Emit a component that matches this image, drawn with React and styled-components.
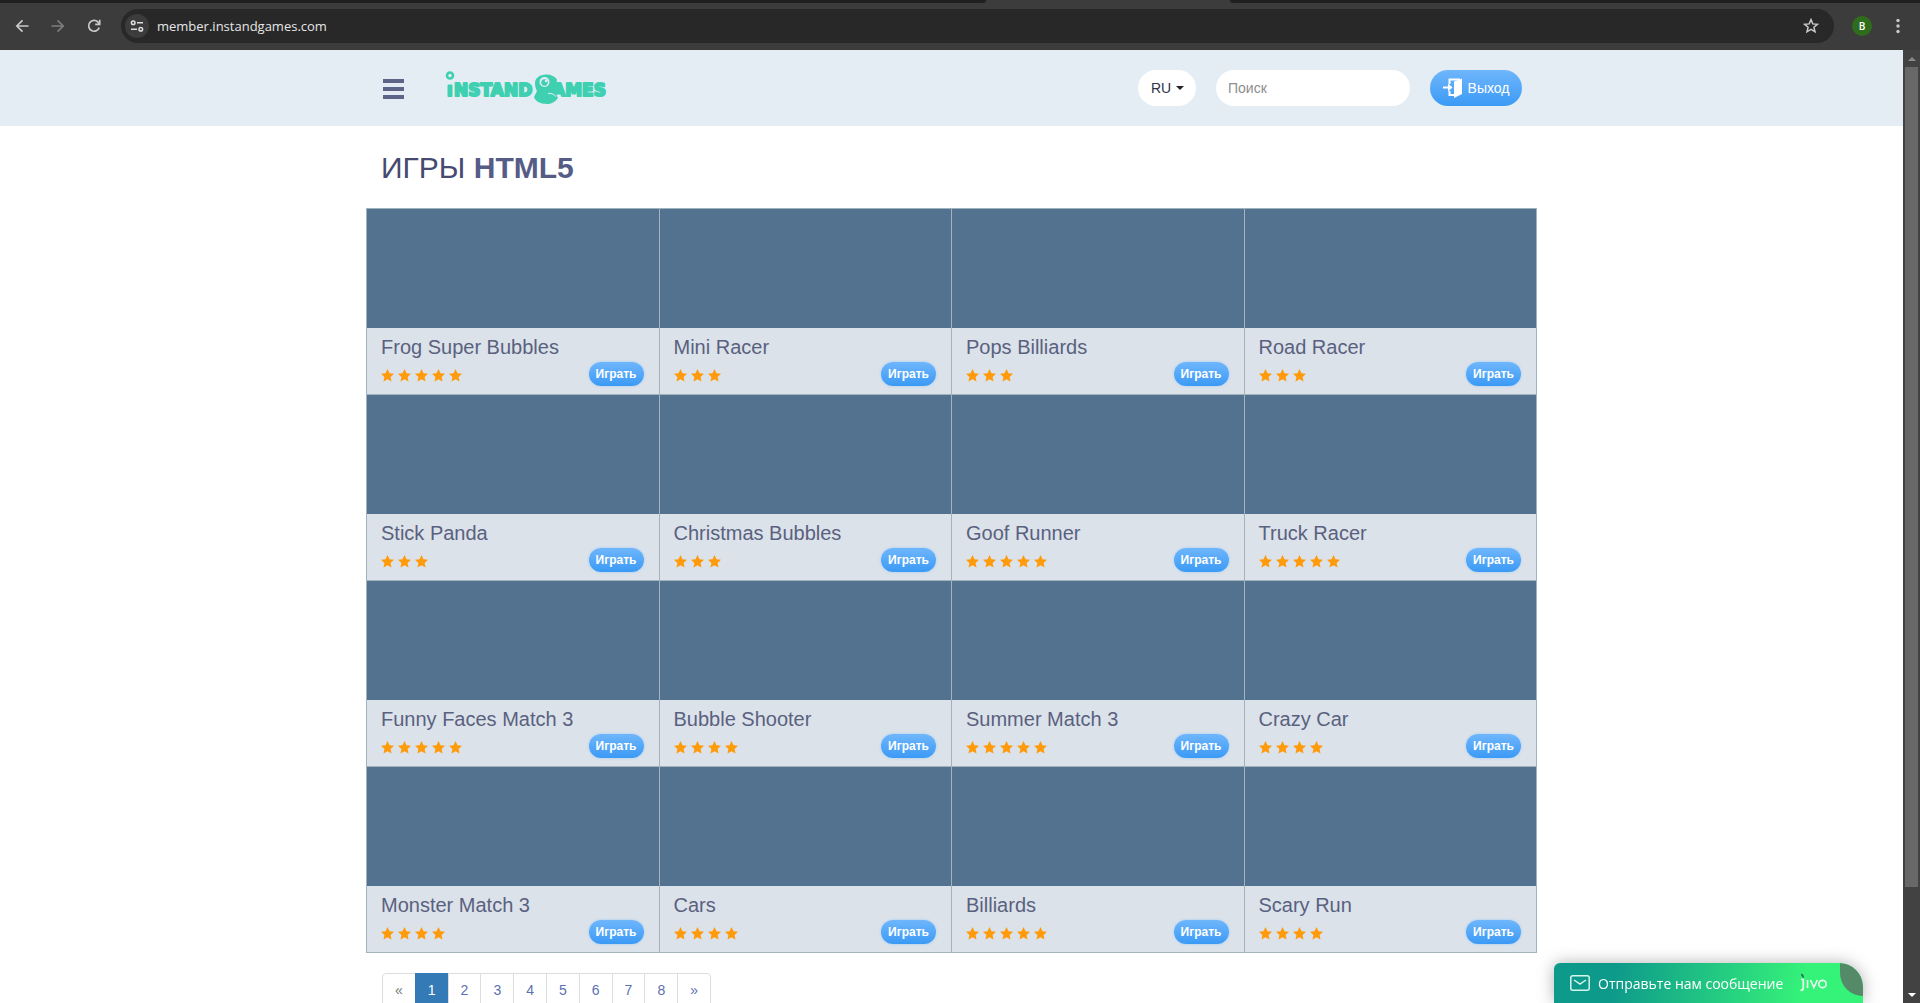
import React from 'react';
import styled, { createGlobalStyle } from 'styled-components';

const GlobalStyle = createGlobalStyle`
* { box-sizing: border-box; }
body {
  margin: 0;
  background: #fff;
  font-family: "Liberation Sans", Arial, sans-serif;
  font-size: 14px;
  line-height: 20px;
}
button, input, select { font-family: inherit; font-size: inherit; }
a { text-decoration: none; }
`
const Window = styled.div`
  display: flex;
  flex-direction: column;
  height: 100vh;
  overflow: hidden;
`

/* browser bar */
const TabStrip = styled.div`
  display: grid;
  grid-template-columns: 986fr 244fr 690fr;
  height: 3px;
  flex: none;
  background: #3c3c3c;
`
const TabGap = styled.div`
  background: #202020;
  border-radius: ${({ $side }) => ($side === 'left' ? '0 0 4px 0' : '0 0 0 4px')};
`
const Toolbar = styled.div`
  display: flex;
  align-items: center;
  flex: none;
  height: 47px;
  padding: 0 10px;
  background: #3c3c3c;
`
const ToolButton = styled.button`
  display: flex;
  align-items: center;
  justify-content: center;
  width: 24px;
  height: 32px;
  padding: 0;
  border: 0;
  background: none;
  color: ${({ $dim }) => ($dim ? '#7d7d7d' : '#c9c9c9')};
`
const Address = styled.div`
  display: flex;
  align-items: center;
  flex: 1;
  height: 34px;
  margin: 0 16px 2px 7px;
  padding: 0 11px 0 4px;
  border-radius: 17px;
  background: #282828;
`
const SiteInfo = styled.button`
  display: flex;
  align-items: center;
  justify-content: center;
  width: 24px;
  height: 24px;
  padding: 0;
  border: 0;
  border-radius: 50%;
  background: #3c3c3c;
  color: #dedede;
`
const Url = styled.input`
  flex: 1;
  height: 24px;
  margin-left: 8px;
  padding: 0;
  border: 0;
  outline: 0;
  background: none;
  color: #e6e6e6;
  font-family: "Open Sans", "Noto Sans", sans-serif;
  font-size: 13px;
`
const NavGroup = styled.div`
  display: flex;
  gap: 12px;
  margin-bottom: 2px;
  margin-right: 8px;
`
const EndGroup = styled.div`
  display: flex;
  align-items: center;
  gap: 12px;
  margin-bottom: 2px;
`
const Avatar = styled.button`
  width: 20px;
  height: 20px;
  margin: 0 2px;
  padding: 0;
  border: 0;
  border-radius: 50%;
  background: #2f6c1c;
  color: #fff;
  font-family: "Open Sans", "Noto Sans", sans-serif;
  font-size: 10px;
  font-weight: 600;
  line-height: 20px;
`

/* page */
const Viewport = styled.div`
  position: relative;
  display: flex;
  flex: 1;
  min-height: 0;
`
const Page = styled.div`
  flex: 1;
  overflow: hidden;
`
const Container = styled.div`
  max-width: 1171px;
  margin: 0 auto;
`
const Header = styled.header`
  background: #e4edf3;
`
const HeaderRow = styled(Container)`
  display: flex;
  align-items: center;
  height: 76px;
  padding: 0 15px 0 17px;
`
const MenuButton = styled.button`
  display: flex;
  flex-direction: column;
  gap: 4px;
  padding: 2px 0 0;
  border: 0;
  background: none;
`
const MenuBar = styled.span`
  width: 21px;
  height: 4px;
  background: #5c6487;
`
const LogoLink = styled.a`
  display: flex;
  margin-left: 41px;
`
const HeaderTools = styled.div`
  display: flex;
  align-items: center;
  gap: 20px;
  margin-left: auto;
`
const LangBox = styled.label`
  display: flex;
  align-items: center;
  width: 58px;
  height: 36px;
  padding-left: 13px;
  border-radius: 18px;
  background: #fff;
`
const LangSelect = styled.select`
  width: 25px;
  padding: 0;
  border: 0;
  outline: 0;
  appearance: none;
  background: none;
  color: #2f3347;
`
const Caret = styled.span`
  border: 4px solid transparent;
  border-top-color: #222;
  border-bottom: 0;
`
const Search = styled.input`
  width: 194px;
  height: 36px;
  padding: 0 12px;
  border: 0;
  border-radius: 18px;
  background: #fff;
  &::placeholder { color: #8e8e8e; }
`
const BlueButton = styled.button`
  display: flex;
  align-items: center;
  justify-content: center;
  border: 0;
  background: linear-gradient(#6fb6fc, #3b9af5);
  color: #fff;
`
const LogoutButton = styled(BlueButton)`
  gap: 5px;
  width: 92px;
  height: 36px;
  padding: 0;
  border-radius: 18px;
`
const Title = styled.h1`
  margin: 22px 0;
  padding: 1px 0 0 15px;
  color: #454a70;
  font-size: 30px;
  font-weight: 400;
  line-height: 37px;
  b { color: #555c86; }
`
const Grid = styled.main`
  display: grid;
  grid-template-columns: repeat(4, 1fr);
  border-top: 1px solid #9fb2c0;
  border-left: 1px solid #a3b3bd;
`
const Card = styled.article`
  border-right: 1px solid #a3b3bd;
  border-bottom: 1px solid #a3b3bd;
  background: #dce2e9;
`
const Cover = styled.div`
  height: 119px;
  background: #53728f;
`
const Info = styled.div`
  height: 66px;
  padding: 8px 15px 0 14px;
`
const Name = styled.h2`
  margin: 0;
  color: #596180;
  font-size: 20px;
  font-weight: 400;
  line-height: 22px;
`
const InfoRow = styled.div`
  display: flex;
  align-items: center;
  justify-content: space-between;
  margin-top: 4px;
`
const Stars = styled.div`
  display: flex;
  gap: 4px;
  padding-top: 2px;
`
const PlayButton = styled(BlueButton)`
  width: 55px;
  height: 24px;
  padding: 0;
  border-radius: 12px;
  font-size: 12px;
  font-weight: 700;
  box-shadow: 0 0 3px #9ccdf8;
`
const Pagination = styled.nav`
  display: flex;
  margin: 20px 0 0 16px;
`
const PageLink = styled.a`
  margin-left: -1px;
  padding: 6px 12px;
  border: 1px solid ${({ $active }) => ($active ? '#337ab7' : '#ddd')};
  background: ${({ $active }) => ($active ? '#337ab7' : '#fff')};
  color: ${({ $active, $muted }) => ($active ? '#fff' : $muted ? '#777' : '#5b70b4')};
  &:first-child {
    margin-left: 0;
    border-radius: 4px 0 0 4px;
  }
  &:last-child { border-radius: 0 4px 4px 0; }
`

/* scrollbar */
const ScrollTrack = styled.div`
  display: flex;
  flex-direction: column;
  align-items: center;
  width: 17px;
  background: #424242;
`
const ScrollArrow = styled.div`
  display: flex;
  align-items: center;
  justify-content: center;
  height: 17px;
  color: ${({ $color }) => $color};
`
const ScrollThumb = styled.div`
  width: 13px;
  height: 86%;
  margin-bottom: auto;
  background: #686868;
`

/* chat */
const Chat = styled.button`
  position: absolute;
  right: 57px;
  bottom: 0;
  display: flex;
  align-items: center;
  width: 309px;
  height: 40px;
  padding: 0 0 0 16px;
  border: 0;
  border-radius: 6px 24px 0 0;
  overflow: hidden;
  background: linear-gradient(100deg, #0e9a8b 20%, #35f279 80%);
  color: #fff;
  font-family: "Open Sans", "Noto Sans", sans-serif;
  font-size: 14px;
`
const ChatShadow = styled.div`
  filter: drop-shadow(0 0 8px rgba(0, 0, 0, 0.3));
`
const ChatText = styled.span`
  margin-left: 8px;
  white-space: nowrap;
`
const ChatBrand = styled.span`
  display: flex;
  margin-left: auto;
  margin-right: 35px;
`
const ChatCorner = styled.span`
  position: absolute;
  top: 0;
  right: 0;
  width: 23px;
  height: 33px;
  border-radius: 0 24px 0 24px;
  background: #548a68;
`

const games = [
  { name: 'Frog Super Bubbles', stars: 5 },
  { name: 'Mini Racer', stars: 3 },
  { name: 'Pops Billiards', stars: 3 },
  { name: 'Road Racer', stars: 3 },
  { name: 'Stick Panda', stars: 3 },
  { name: 'Christmas Bubbles', stars: 3 },
  { name: 'Goof Runner', stars: 5 },
  { name: 'Truck Racer', stars: 5 },
  { name: 'Funny Faces Match 3', stars: 5 },
  { name: 'Bubble Shooter', stars: 4 },
  { name: 'Summer Match 3', stars: 5 },
  { name: 'Crazy Car', stars: 4 },
  { name: 'Monster Match 3', stars: 4 },
  { name: 'Cars', stars: 4 },
  { name: 'Billiards', stars: 5 },
  { name: 'Scary Run', stars: 4 },
]
const pages = ['«', '1', '2', '3', '4', '5', '6', '7', '8', '»']

const line = { fill: 'none', stroke: 'currentColor', strokeWidth: 1.7 }

const BrowserBar = () => {
  return (
    <>
      <TabStrip>
        <TabGap $side="left" />
        <span />
        <TabGap $side="right" />
      </TabStrip>
      <Toolbar>
        <NavGroup>
          <ToolButton aria-label="Back">
            <svg width="14" height="14" viewBox="0 0 14 14" {...line}><path d="M13.5 7H2M7.5 1.3 1.8 7l5.7 5.7" /></svg>
          </ToolButton>
          <ToolButton aria-label="Forward" $dim>
            <svg width="14" height="14" viewBox="0 0 14 14" {...line}><path d="M.5 7H12M6.5 1.3 12.2 7l-5.7 5.7" /></svg>
          </ToolButton>
          <ToolButton aria-label="Reload">
            <svg width="14" height="14" viewBox="0 0 14 14" {...line}>
              <path d="M12.2 8.6A5.4 5.4 0 1 1 11 3.1l1.6 1.6M12.7.8v4.5H8.2" />
            </svg>
          </ToolButton>
        </NavGroup>
        <Address>
          <SiteInfo aria-label="Site information">
            <svg width="14" height="14" viewBox="0 0 14 14" fill="none" stroke="currentColor" strokeWidth="1.5">
              <circle cx="3.2" cy="3.7" r="1.8" />
              <path d="M7 3.7h6M1 10.3h6" />
              <circle cx="10.8" cy="10.3" r="1.8" />
            </svg>
          </SiteInfo>
          <Url aria-label="Address" defaultValue="member.instandgames.com" />
          <ToolButton aria-label="Bookmark">
            <svg width="16" height="16" viewBox="0 0 16 16" fill="none" stroke="currentColor" strokeWidth="1.5">
              <path d="m8 1.6 1.8 4.3 4.600.4-3.500 3 1.100 4.500L8 11.400l-4 2.400 1.100-4.500-3.500-3 4.600-.4z" />
            </svg>
          </ToolButton>
        </Address>
        <EndGroup>
          <Avatar>B</Avatar>
          <ToolButton aria-label="Menu">
            <svg width="4" height="16" viewBox="0 0 4 16" fill="currentColor">
              <circle cx="2" cy="2.5" r="1.7" /><circle cx="2" cy="8" r="1.7" /><circle cx="2" cy="13.5" r="1.7" />
            </svg>
          </ToolButton>
        </EndGroup>
      </Toolbar>
    </>
  )
}

const Logo = () => {
  return (
    <svg width="162" height="36" viewBox="0 0 162 36" role="img" aria-label="InstandGames">
      <g fill="#3fd0b2" stroke="#3fd0b2" strokeWidth="2" strokeLinejoin="round" fontFamily="DejaVu Sans, sans-serif" fontWeight="700" fontSize="17">
        <path d="M3.5 15.500h3V26h-3z" />
        <text x="9" y="26">NSTAND</text>
        <text x="107" y="26">AMES</text>
      </g>
      <circle cx="5" cy="5.5" r="3" fill="none" stroke="#3fd0b2" strokeWidth="2.6" />
      <path fill="#3fd0b2" d="M90 13c0-5 5-8.500 11-8.500 5 0 9 2 11 5l-1 9-3 3 5 6c-2 4-6 6.500-11 6.500-7 0-12-3-13-7l3-6c-1-2-2-4-2-8z" />
      <circle cx="99.5" cy="12" r="5" fill="#e4edf3" />
      <circle cx="99.5" cy="12.5" r="3.2" fill="#3fd0b2" />
      <circle cx="101" cy="11" r="1.2" fill="#e4edf3" />
      <path d="M103 23.500c3-.2 5 0 8 3" fill="none" stroke="#e4edf3" strokeWidth="1" />
    </svg>
  )
}

const SiteHeader = () => {
  return (
    <Header>
      <HeaderRow>
        <MenuButton aria-label="Меню">
          <MenuBar /><MenuBar /><MenuBar />
        </MenuButton>
        <LogoLink href="#"><Logo /></LogoLink>
        <HeaderTools>
          <LangBox>
            <LangSelect aria-label="Язык" defaultValue="RU">
              <option>RU</option>
              <option>EN</option>
            </LangSelect>
            <Caret />
          </LangBox>
          <Search type="search" aria-label="Поиск" placeholder="Поиск" />
          <LogoutButton>
            <svg width="20" height="20" viewBox="0 0 20 20" fill="#fff">
              <path d="M11 3.500 19 .5V16l-8 4z" />
              <path d="M17 1.500H6.500V6M6.500 13v4H11" fill="none" stroke="#fff" strokeWidth="2" />
              <path d="M0 8.500h5V5.500l4.500 4-4.500 4v-3H0z" />
            </svg>
            Выход
          </LogoutButton>
        </HeaderTools>
      </HeaderRow>
    </Header>
  )
}

const GameCard = ({ game }) => {
  return (
    <Card>
      <Cover />
      <Info>
        <Name>{game.name}</Name>
        <InfoRow>
          <Stars>
            {
              Array.from({ length: game.stars }, (_, idx) => (
                <svg key={idx} width="13" height="13" viewBox="0 0 13 13" fill="#ff9a0a">
                  <path d="m6.500 0 2 4.200 4.500.5-3.400 3.200.9 4.700-4-2.300-4 2.300.9-4.700L0 4.700l4.500-.5z" />
                </svg>
              ))
            }
          </Stars>
          <PlayButton>Играть</PlayButton>
        </InfoRow>
      </Info>
    </Card>
  )
}

const ChatWidget = () => {
  return (
    <ChatShadow>
      <Chat>
        <svg width="20" height="16" viewBox="0 0 20 16" fill="none" stroke="#d6f5ec" strokeWidth="1.5">
          <rect x=".8" y=".8" width="18.4" height="14.4" rx="2" />
          <path d="m4 5 6 4 6-4" />
        </svg>
        <ChatText>Отправьте нам сообщение</ChatText>
        <ChatBrand>
          <svg width="28" height="20" viewBox="0 0 28 20" role="img" aria-label="jivo">
            <g fill="none" stroke="#e6ffee" strokeWidth="1.7">
              <path d="M1 6.500h2.300v8c0 2-1 3-2.800 3M7.500 7v8M10.500 7l3.400 7.500L17.300 7" />
              <circle cx="22.5" cy="11" r="3.7" />
            </g>
            <path d="M1 .5c2 .5 3 2 3 4.500C2.500 4.500 1 3 1 .5z" fill="#1c6b4a" />
          </svg>
        </ChatBrand>
        <ChatCorner />
      </Chat>
    </ChatShadow>
  )
}

const App = () => {
  return (
    <Window>
      <GlobalStyle />
      <BrowserBar />
      <Viewport>
        <Page>
          <SiteHeader />
          <Container>
            <Title>ИГРЫ <b>HTML5</b></Title>
            <Grid>
              {games.map((it) => <GameCard key={it.name} game={it} />)}
            </Grid>
            <Pagination>
              {
                pages.map((it) => (
                  <PageLink key={it} href="#" $active={it === '1'} $muted={it === '«'}>{it}</PageLink>
                ))
              }
            </Pagination>
          </Container>
        </Page>
        <ScrollTrack>
          <ScrollArrow $color="#8a8a8a">
            <svg width="8" height="4" viewBox="0 0 8 4"><path d="M0 4 4 0l4 4z" fill="currentColor" /></svg>
          </ScrollArrow>
          <ScrollThumb />
          <ScrollArrow $color="#fff">
            <svg width="8" height="4" viewBox="0 0 8 4"><path d="m0 0 4 4 4-4z" fill="currentColor" /></svg>
          </ScrollArrow>
        </ScrollTrack>
        <ChatWidget />
      </Viewport>
    </Window>
  )
}

export default App;
